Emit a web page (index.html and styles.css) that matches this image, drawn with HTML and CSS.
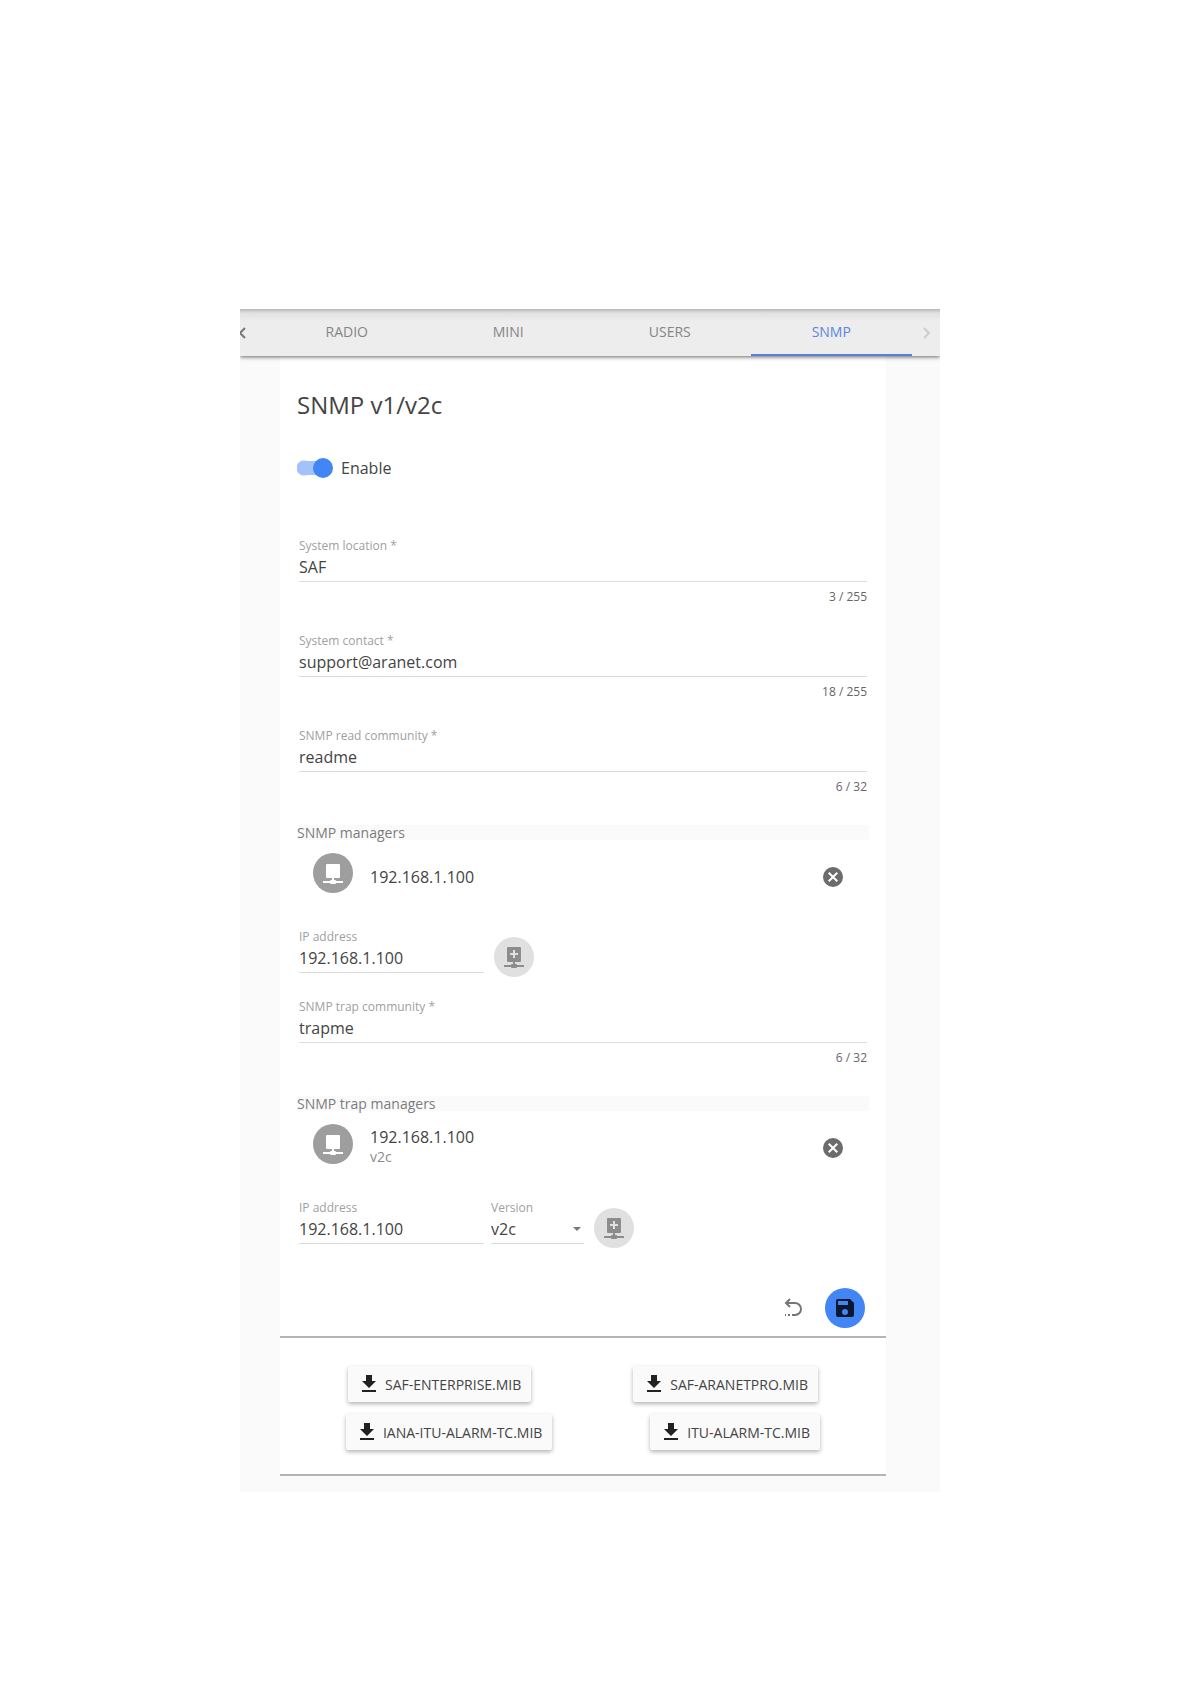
FILE: index.html
```html
<!DOCTYPE html>
<html lang="en">
<head>
    <meta charset="UTF-8">
    <meta name="viewport" content="width=device-width, initial-scale=1.0">
    <title>SNMP settings</title>
    <link rel="stylesheet" href="styles.css">
</head>
<body>
    <!-- Shared icons -->
    <svg class="icon-defs" aria-hidden="true">
        <symbol id="icon-download" viewBox="0 0 24 24"><path d="M5 20h14v-2H5zM19 9h-4V3H9v6H5l7 7z"/></symbol>
        <symbol id="icon-close" viewBox="0 0 24 24"><path d="M12 2a10 10 0 1 0 0 20 10 10 0 0 0 0-20zm5 13.600L15.600 17 12 13.400 8.400 17 7 15.600 10.600 12 7 8.400 8.400 7 12 10.600 15.600 7 17 8.400 13.400 12z"/></symbol>
        <symbol id="icon-host" viewBox="0 0 24 24"><path d="M6 3h12a1 1 0 0 1 1 1v12a1 1 0 0 1-1 1h-5v2h1a1 1 0 0 1 1 1h7v2h-7a1 1 0 0 1-1 1h-4a1 1 0 0 1-1-1H2v-2h7a1 1 0 0 1 1-1h1v-2H6a1 1 0 0 1-1-1V4a1 1 0 0 1 1-1z"/></symbol>
        <symbol id="icon-host-add" viewBox="0 0 24 24"><path fill-rule="evenodd" d="M6 2h12a1 1 0 0 1 1 1v13a1 1 0 0 1-1 1h-5v2h1a1 1 0 0 1 1 1h7v2h-7a1 1 0 0 1-1 1h-4a1 1 0 0 1-1-1H2v-2h7a1 1 0 0 1 1-1h1v-2H6a1 1 0 0 1-1-1V3a1 1 0 0 1 1-1zm5 3v3H8v2h3v3h2v-3h3V8h-3V5z"/></symbol>
    </svg>

    <main class="panel">
        <nav class="tabs">
            <button type="button" class="tab-arrow prev" aria-label="Previous tabs">
                <svg viewBox="0 0 8 12"><path d="M5 1L0 6l5 5"/></svg>
            </button>
            <a href="#radio" class="tab">RADIO</a>
            <a href="#mini" class="tab">MINI</a>
            <a href="#users" class="tab">USERS</a>
            <a href="#snmp" class="tab active">SNMP</a>
            <button type="button" class="tab-arrow next" aria-label="Next tabs" disabled>
                <svg viewBox="0 0 8 12"><path d="M2 1l5 5-5 5"/></svg>
            </button>
        </nav>

        <form class="card">
            <h1>SNMP v1/v2c</h1>
            <label class="switch">
                <input type="checkbox" checked>
                Enable
            </label>

            <div class="fields">
                <div class="field">
                    <label for="location">System location *</label>
                    <input type="text" id="location" value="SAF">
                    <div class="counter">3 / 255</div>
                </div>
                <div class="field">
                    <label for="contact">System contact *</label>
                    <input type="text" id="contact" value="support@aranet.com">
                    <div class="counter">18 / 255</div>
                </div>
                <div class="field">
                    <label for="read-community">SNMP read community *</label>
                    <input type="text" id="read-community" value="readme">
                    <div class="counter">6 / 32</div>
                </div>
            </div>

            <h2>SNMP managers</h2>
            <div class="manager">
                <div class="avatar"><svg><use href="#icon-host"/></svg></div>
                <div class="manager-text">
                    <div class="address">192.168.1.100</div>
                </div>
                <button type="button" class="remove" aria-label="Remove manager"><svg><use href="#icon-close"/></svg></button>
            </div>
            <div class="add-row">
                <div class="field ip">
                    <label for="manager-ip">IP address</label>
                    <input type="text" id="manager-ip" value="192.168.1.100">
                </div>
                <button type="button" class="round" aria-label="Add manager"><svg><use href="#icon-host-add"/></svg></button>
            </div>

            <div class="field trap">
                <label for="trap-community">SNMP trap community *</label>
                <input type="text" id="trap-community" value="trapme">
                <div class="counter">6 / 32</div>
            </div>

            <h2>SNMP trap managers</h2>
            <div class="manager">
                <div class="avatar"><svg><use href="#icon-host"/></svg></div>
                <div class="manager-text">
                    <div class="address">192.168.1.100</div>
                    <div class="version">v2c</div>
                </div>
                <button type="button" class="remove" aria-label="Remove trap manager"><svg><use href="#icon-close"/></svg></button>
            </div>
            <div class="add-row">
                <div class="field ip">
                    <label for="trap-ip">IP address</label>
                    <input type="text" id="trap-ip" value="192.168.1.100">
                </div>
                <div class="field select">
                    <label for="trap-version">Version</label>
                    <select id="trap-version">
                        <option>v1</option>
                        <option selected>v2c</option>
                    </select>
                    <span class="caret"></span>
                </div>
                <button type="button" class="round" aria-label="Add trap manager"><svg><use href="#icon-host-add"/></svg></button>
            </div>

            <div class="actions">
                <button type="reset" class="undo" aria-label="Undo">
                    <svg viewBox="0 0 24 24"><path d="M9 3L5 7l4 4M5 7h9a6 6 0 0 1 0 12h-3M9 19H7M5 19H4"/></svg>
                </button>
                <button type="submit" class="round save" aria-label="Save">
                    <svg viewBox="0 0 24 24"><path fill-rule="evenodd" d="M17 3H5a2 2 0 0 0-2 2v14a2 2 0 0 0 2 2h14a2 2 0 0 0 2-2V7zM15 9H5V5h10zM12 13a3 3 0 1 1 0 6 3 3 0 0 1 0-6z"/></svg>
                </button>
            </div>
        </form>

        <section class="card downloads">
            <div class="download-row">
                <button type="button" class="download"><svg><use href="#icon-download"/></svg>SAF-ENTERPRISE.MIB</button>
                <button type="button" class="download"><svg><use href="#icon-download"/></svg>SAF-ARANETPRO.MIB</button>
            </div>
            <div class="download-row">
                <button type="button" class="download"><svg><use href="#icon-download"/></svg>IANA-ITU-ALARM-TC.MIB</button>
                <button type="button" class="download"><svg><use href="#icon-download"/></svg>ITU-ALARM-TC.MIB</button>
            </div>
        </section>
    </main>
</body>
</html>
```

FILE: styles.css
```css
* {
    box-sizing: border-box;
}

body {
    margin: 0;
    padding: 309px 10px 0 0;
    background: #fff;
    font-family: "Open Sans", "Noto Sans", sans-serif;
    font-size: 16px;
    color: #444;
}

button, input, select {
    font: inherit;
    color: inherit;
    margin: 0;
    padding: 0;
    border: none;
    background: none;
}

button {
    cursor: pointer;
}

svg {
    display: block;
    width: 24px;
    height: 24px;
    fill: currentColor;
}

.icon-defs {
    display: none;
}

.panel {
    max-width: 700px;
    margin: 0 auto;
    padding-bottom: 16px;
    background: #fafafa;
}

/* Tab bar */
.tabs {
    position: relative;
    display: flex;
    height: 47px;
    background: linear-gradient(#b8b8b8, #e0e0e0 4px, #ededed 12px);
    box-shadow: 0 1px 4px rgba(0, 0, 0, 0.6);
    clip-path: inset(0 0 -8px 0);
}

.tab {
    flex: 1;
    padding-top: 2px;
    border-bottom: 2px solid transparent;
    font-size: 14px;
    line-height: 42px;
    text-align: center;
    text-decoration: none;
    color: #858585;
}

.tab.active {
    color: #5c86e0;
    border-bottom-color: #5a80d8;
}

.tab-arrow {
    width: 26px;
}

.tab-arrow.next {
    width: 28px;
}

.tab-arrow svg {
    width: 8px;
    height: 12px;
    fill: none;
    stroke: #777;
    stroke-width: 2;
}

.tab-arrow.next svg {
    margin: 0 auto;
    stroke: #ccc;
}

/* Cards */
.card {
    margin: 0 54px 0 40px;
    padding: 33px 17px 8px;
    background: #fff;
    border-bottom: 2px solid #b4b4b4;
}

h1 {
    margin: 0 0 35px;
    font-size: 24px;
    font-weight: 400;
    line-height: 32px;
}

h2 {
    margin: 30px 0 0;
    background: #fafafa;
    font-size: 14px;
    font-weight: 400;
    line-height: 15px;
    color: #7c7c7c;
}

.switch {
    display: flex;
    align-items: center;
    gap: 8px;
    height: 24px;
}

.switch input {
    appearance: none;
    display: flex;
    align-items: center;
    justify-content: flex-end;
    width: 36px;
    height: 20px;
    background: linear-gradient(#a3c2fa, #a3c2fa) 7px 3px / 20px 14px no-repeat,
        radial-gradient(circle at 7px 10px, #a3c2fa 7px, transparent 8px);
}

.switch input::before {
    content: "";
    width: 20px;
    height: 20px;
    border-radius: 50%;
    background: #4285f4;
}

/* Fields */
.fields {
    display: flex;
    flex-direction: column;
    gap: 28px;
    margin-top: 58px;
}

.field {
    margin: 0 2px;
}

.field label {
    display: block;
    font-size: 12px;
    line-height: 16px;
    color: #a0a0a0;
}

.field input, .field select {
    display: block;
    width: 100%;
    height: 28px;
    padding-bottom: 2px;
    border-bottom: 1px solid #dcdcdc;
    border-radius: 0;
    outline: none;
}

.counter {
    margin-top: 7px;
    font-size: 12px;
    line-height: 16px;
    text-align: right;
    color: #666;
}

.field.ip {
    width: 185px;
}

.field.select {
    position: relative;
    width: 93px;
    margin-left: 5px;
}

.field select {
    appearance: none;
}

.caret {
    position: absolute;
    right: 3px;
    bottom: 13px;
    border: 4px solid transparent;
    border-top-color: #777;
    border-bottom: none;
    pointer-events: none;
}

.field.trap {
    margin-top: 22px;
}

/* Manager list */
.manager {
    display: flex;
    align-items: center;
    height: 74px;
    padding: 0 24px 0 16px;
}

.avatar {
    display: grid;
    place-items: center;
    width: 40px;
    height: 40px;
    margin: 0 17px 8px 0;
    border-radius: 50%;
    background: #9e9e9e;
    color: #fff;
}

.manager-text {
    flex: 1;
}

.address {
    line-height: 18px;
}

.version {
    font-size: 14px;
    line-height: 22px;
    color: #8c8c8c;
}

.remove {
    color: #6c6c6c;
}

.add-row {
    display: flex;
    align-items: flex-start;
    margin-top: 15px;
}

.round {
    display: grid;
    place-items: center;
    width: 40px;
    height: 40px;
    margin: 8px 0 0 8px;
    border-radius: 50%;
    background: #e0e0e0;
    color: #8c8c8c;
}

.actions {
    display: flex;
    justify-content: flex-end;
    align-items: center;
    gap: 20px;
    margin: 40px 4px 0 0;
}

.undo svg {
    fill: none;
    stroke: #757575;
    stroke-width: 2;
}

.save {
    margin: 0;
    background: #4285f4;
    color: #0b1830;
}

/* MIB downloads */
.downloads {
    padding: 28px 17px 24px;
}

.download-row {
    display: flex;
    justify-content: space-around;
}

.download-row + .download-row {
    margin-top: 12px;
}

.download {
    display: flex;
    align-items: center;
    gap: 4px;
    height: 36px;
    padding: 0 10px 0 9px;
    border-radius: 2px;
    background: #fafafa;
    box-shadow: 0 2px 4px rgba(0, 0, 0, 0.3);
    font-size: 14px;
}

.download svg {
    color: #222;
}
```
